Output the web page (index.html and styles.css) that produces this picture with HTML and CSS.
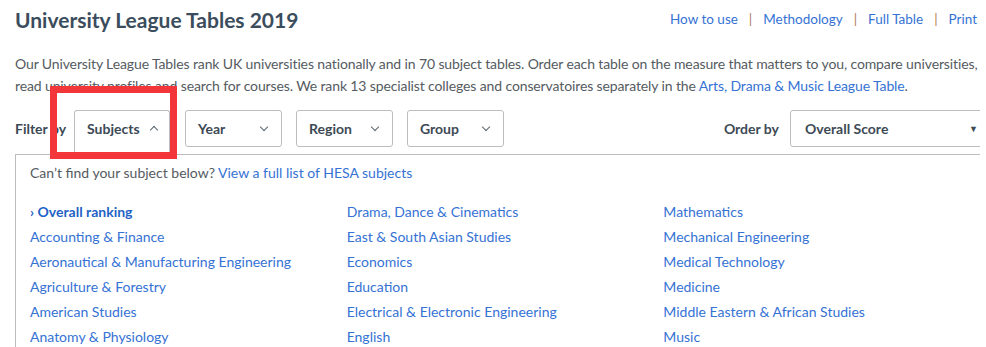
FILE: index.html
```
<html>
    <head>
        <meta charset="UTF-8">
        <link rel="stylesheet" href="styles.css">
    </head>
    <body>
        <div id="pagina">
            <div class="cabecera">
                <h1>University League Tables 2019</h1>
                <div class="enlaces">
                    <a href="#">How to use</a><span class="sep">|</span><a href="#">Methodology</a><span class="sep">|</span><a href="#">Full Table</a><span class="sep">|</span><a href="#">Print</a>
                </div>
            </div>
            <p class="intro">Our University League Tables rank UK universities nationally and in 70 subject tables. Order each table on the measure that matters to you, compare universities, read university profiles and search for courses. We rank 13 specialist colleges and conservatoires separately in the <a href="#">Arts, Drama &amp; Music League Table</a>.</p>

            <div class="filtros">
                <span class="etiqueta primera">Filter by</span>
                <div class="caja abierta">Subjects <span class="flecha arriba"></span></div>
                <div class="caja">Year <span class="flecha"></span></div>
                <div class="caja">Region <span class="flecha"></span></div>
                <div class="caja">Group <span class="flecha"></span></div>
                <span class="etiqueta orden">Order by</span>
                <div class="selector">Overall Score <span class="triangulo">&#9660;</span></div>
                <div class="marca"></div>
            </div>

            <div class="panel">
                <p class="aviso">Can’t find your subject below? <a href="#">View a full list of HESA subjects</a></p>
                <div class="columnas">
                    <ul>
                        <li><a href="#" class="activo">› Overall ranking</a></li>
                        <li><a href="#">Accounting &amp; Finance</a></li>
                        <li><a href="#">Aeronautical &amp; Manufacturing Engineering</a></li>
                        <li><a href="#">Agriculture &amp; Forestry</a></li>
                        <li><a href="#">American Studies</a></li>
                        <li><a href="#">Anatomy &amp; Physiology</a></li>
                    </ul>
                    <ul>
                        <li><a href="#">Drama, Dance &amp; Cinematics</a></li>
                        <li><a href="#">East &amp; South Asian Studies</a></li>
                        <li><a href="#">Economics</a></li>
                        <li><a href="#">Education</a></li>
                        <li><a href="#">Electrical &amp; Electronic Engineering</a></li>
                        <li><a href="#">English</a></li>
                    </ul>
                    <ul>
                        <li><a href="#">Mathematics</a></li>
                        <li><a href="#">Mechanical Engineering</a></li>
                        <li><a href="#">Medical Technology</a></li>
                        <li><a href="#">Medicine</a></li>
                        <li><a href="#">Middle Eastern &amp; African Studies</a></li>
                        <li><a href="#">Music</a></li>
                    </ul>
                </div>
            </div>
        </div>
    </body>
</html>
```

FILE: styles.css
```
body {
    margin: 0;
    background: #fff;
    font-family: Lato, "Liberation Sans", sans-serif;
    color: #555b61;
    overflow: hidden;
}
a {
    color: #3572d4;
    text-decoration: none;
}
#pagina {
    width: 965px;
    padding-left: 15px;
    overflow: hidden;
}
.cabecera {
    display: flex;
    justify-content: space-between;
    align-items: flex-start;
    margin-top: 5px;
}
h1 {
    margin: 0;
    font-size: 21px;
    line-height: 30px;
    color: #3b4d5c;
    font-weight: bold;
}
.enlaces {
    font-size: 13.5px;
    line-height: 20px;
    margin-top: 4px;
    margin-right: 3px;
}
.sep {
    color: #b07a55;
    margin: 0 11px;
}
.intro {
    margin: 18px -15px 0 0;
    font-size: 14px;
    line-height: 22px;
    letter-spacing: -0.12px;
}
.filtros {
    position: relative;
    display: flex;
    align-items: flex-start;
    margin-top: 13px;
    height: 44px;
}
.etiqueta {
    font-size: 14px;
    font-weight: bold;
    color: #3d4a55;
    line-height: 37px;
    margin-right: 11px;
}
.etiqueta.primera {
    width: 59px;
    margin-right: 0;
    white-space: nowrap;
}
.etiqueta.orden {
    margin-left: auto;
    margin-right: 11px;
}
.caja {
    position: relative;
    z-index: 2;
    box-sizing: border-box;
    width: 97px;
    height: 37px;
    margin-right: 14px;
    padding-left: 12px;
    border: 1px solid #bdbdbd;
    border-radius: 3px;
    background: #fff;
    font-size: 14px;
    font-weight: bold;
    color: #3d4a55;
    line-height: 35px;
}
.caja.abierta {
    width: 96px;
    height: 45px;
    margin-right: 15px;
    border-bottom: none;
    border-radius: 3px 3px 0 0;
}
.flecha {
    position: absolute;
    right: 14px;
    top: 13px;
    width: 5px;
    height: 5px;
    border-right: 1px solid #5a6670;
    border-bottom: 1px solid #5a6670;
    transform: rotate(45deg);
}
.flecha.arriba {
    right: 12px;
    top: 16px;
    transform: rotate(225deg);
}
.selector {
    position: relative;
    box-sizing: border-box;
    width: 205px;
    height: 37px;
    margin-right: -15px;
    padding-left: 14px;
    border: 1px solid #bdbdbd;
    border-radius: 3px;
    font-size: 14px;
    font-weight: bold;
    color: #3d4a55;
    line-height: 35px;
}
.triangulo {
    position: absolute;
    right: 16px;
    top: 0;
    font-size: 9px;
    color: #3d4a55;
}
.marca {
    position: absolute;
    z-index: 3;
    left: 35px;
    top: -24px;
    width: 113px;
    height: 59px;
    border: 7px solid #f2363a;
}
.panel {
    border-top: 1px solid #bdbdbd;
    border-left: 1px solid #bdbdbd;
    padding: 8px 0 0 14px;
    height: 200px;
}
.aviso {
    margin: 0;
    font-size: 14px;
    line-height: 20px;
}
.columnas {
    display: flex;
    margin-top: 16px;
}
ul {
    list-style: none;
    margin: 0;
    padding: 0;
    width: 318px;
}
li {
    font-size: 14px;
    line-height: 25px;
}
.activo {
    font-weight: bold;
    color: #1f62c6;
}
```
